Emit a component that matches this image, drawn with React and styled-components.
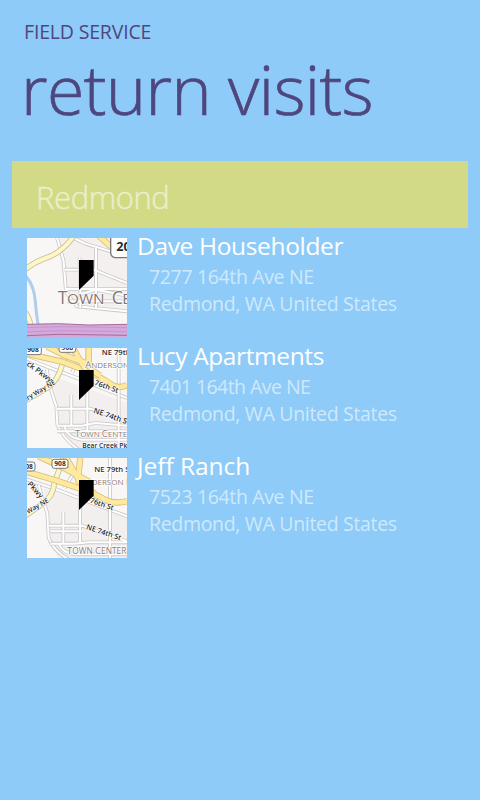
import React from "react";
import styled, { createGlobalStyle } from "styled-components";

const GlobalStyle = createGlobalStyle`
  html, body { margin: 0; padding: 0; background: #8ecbf8; }
  * { box-sizing: border-box; }
`;

const Page = styled.main`
  width: 480px;
  height: 800px;
  overflow: hidden;
  background: #8ecbf8;
  font-family: "Open Sans", "Noto Sans", sans-serif;
  white-space: nowrap;
`;

const Header = styled.header`
  height: 161px;
  padding: 18px 0 0 24px;
  color: #4e467e;
`;

const AppName = styled.div`
  font-size: 19.5px;
  line-height: 28px;
  letter-spacing: -0.18px;
`;

const Title = styled.h1`
  margin: -2px 0 0 -3px;
  font-size: 68px;
  line-height: 90px;
  font-weight: 300;
  letter-spacing: -0.55px;
  -webkit-text-stroke: 0.7px currentColor;
`;

const GroupHeader = styled.h2`
  margin: 0 12px;
  height: 67px;
  padding-left: 24px;
  background: #d2da86;
  color: #ebefca;
  font-size: 31px;
  line-height: 72px;
  font-weight: 300;
  letter-spacing: -0.4px;
  -webkit-text-stroke: 0.4px currentColor;
`;

const List = styled.ul`
  margin: 0;
  padding: 10px 0 0 27px;
  list-style: none;
  display: flex;
  flex-direction: column;
  gap: 10px;
`;

const Visit = styled.li`
  display: flex;
  height: 100px;
  gap: 10px;
`;

const Thumb = styled.svg`
  flex: none;
  width: 100px;
  height: 100px;
  display: block;
  background: #f9f7f6;
`;

const Details = styled.div`
  display: flex;
  flex-direction: column;
  margin-top: -10px;
`;

const Name = styled.div`
  color: #fff;
  font-size: 24.5px;
  line-height: 36px;
  height: 35px;
  letter-spacing: ${(p) => p.$track}px;
`;

const Address = styled.div`
  padding-left: 12px;
  color: #cfe9fc;
  font-size: 19.5px;
  line-height: 27px;
  letter-spacing: ${(p) => p.$track}px;
`;

const Label = styled.text`
  font-family: "Open Sans", "Noto Sans", sans-serif;
  font-size: ${(p) => p.$size || 23}px;
  font-weight: ${(p) => p.$weight || 600};
  fill: ${(p) => p.$color || "#2b2b2b"};
  stroke: #fff;
  stroke-width: 4px;
  stroke-linejoin: round;
  paint-order: stroke;
`;

function Road({ d, kind = "minor" }) {
  const [edge, fill, outer, inner] = {
    minor: ["#cbc8c8", "#ffffff", 11, 6],
    yellow: ["#c4bd98", "#fff6c6", 17, 12],
    major: ["#d8bf7c", "#fee99e", 19, 14],
  }[kind];
  return (
    <g fill="none" strokeLinejoin="round">
      <path d={d} stroke={edge} strokeWidth={outer} />
      <path d={d} stroke={fill} strokeWidth={inner} />
    </g>
  );
}

const Pin = () => <path d="M171 81H215V128L171 171Z" fill="#000" />;

function Shield({ x, y, width = 48, children }) {
  return (
    <g>
      <rect x={x} y={y} width={width} height={27} rx={7} fill="#fff" stroke="#777" strokeWidth={3} />
      <Label x={x + width / 2} y={y + 20} $size={20} $weight={700} textAnchor="middle">
        {children}
      </Label>
    </g>
  );
}

function TownMap() {
  return (
    <Thumb viewBox="15 15 300 300">
      <path d="M104 15H315V236L160 225L128 170Z" fill="#f4f0ef" />
      <Road d="M104 10L125 85L132 178L165 220L315 235" />
      <Road d="M155 15L190 32L315 70" />
      <Road d="M127 110H172M222 45V225M175 110V225M132 168H315M174 184L222 170L315 188M215 110L315 150M135 205H315" />
      <Road d="M173 110V73" />
      <Road kind="yellow" d="M10 109Q40 85 80 72Q122 55 155 10" />
      <Road kind="major" d="M230 8L268 42" />
      <path d="M12 130Q36 158 40 205T49 278" fill="none" stroke="#b0cdec" strokeWidth="9" />
      <Road kind="yellow" d="M10 238Q24 258 27 282" />
      <path d="M15 273L110 272L200 276L315 274V315H15Z" fill="#d4a9dc" />
      <path d="M15 274L110 272L200 276L315 274M15 308L110 304L315 307" fill="none" stroke="#a96a9c" strokeWidth="3" />
      <path d="M15 284L110 281L315 284M15 297L110 293L315 296" fill="none" stroke="#bf8bc9" strokeWidth="2" />
      <rect x="266" y="0" width="80" height="74" rx="15" fill="#fff" stroke="#777" strokeWidth="4" />
      <Label x="283" y="53" $size={38} $weight={700}>20</Label>
      <Label x="107" y="212" $size={53} $weight={500} $color="#807675">
        T<tspan x="135" fontSize="46">OWN</tspan><tspan x="269">C</tspan><tspan x="301" fontSize="46">ENTER</tspan>
      </Label>
      <Pin />
    </Thumb>
  );
}

function ParkwayMap() {
  return (
    <Thumb viewBox="15 15 300 300">
      <path d="M15 180L85 135L103 195L110 255L165 315H15Z" fill="#faf8f7" />
      <path d="M92 100L315 180V315H150L110 255L103 195L85 135Z" fill="#f3efee" />
      <Road d="M10 45L85 75L165 105L315 165" />
      <Road d="M74 78Q84 140 103 190L106 245Q124 288 170 320" />
      <Road d="M104 197H205L315 235M148 245V155M196 15V265M110 248H180L220 240L315 248M105 265H315M128 250Q135 284 180 290H315M290 15V315" />
      <Road d="M120 65L145 35M150 88L175 50" />
      <Road kind="yellow" d="M10 173L80 132Q108 110 119 70L140 10" />
      <Road kind="major" d="M15 32L120 56L190 82Q240 104 264 122T315 126" />
      <Road kind="major" d="M75 10L125 36L205 65M200 10V65Q208 84 235 98M150 10Q168 42 190 78" />
      <Shield x={8} y={8} width={50}>908</Shield>
      <Shield x={111} y={1} width={50}>908</Shield>
      <Label x="239" y="36">NE 79th St</Label>
      <Label x="190" y="75" $size={28} $weight={500} $color="#8b7c7c">A<tspan fontSize="24">NDERSON PARK</tspan></Label>
      <Label transform="translate(13 66) rotate(37)" $size={23}>ck Pkwy</Label>
      <Label transform="translate(8 178) rotate(-31)" $size={20}>ary Way NE</Label>
      <Label transform="translate(183 114) rotate(19)" $size={22}>NE 76th St</Label>
      <Label transform="translate(213 209) rotate(19)" $size={23}>NE 74th St</Label>
      <Label x="159" y="282" $size={28} $weight={500} $color="#8b7c7c">T<tspan fontSize="24">OWN </tspan>C<tspan fontSize="24">ENTER</tspan></Label>
      <Label x="181" y="316" $size={20}>Bear Creek Pkwy</Label>
      <Pin />
    </Thumb>
  );
}

function CreekMap() {
  return (
    <Thumb viewBox="15 15 300 300">
      <path d="M65 105L315 190V315H110L84 270L77 185Z" fill="#f3efee" />
      <Road d="M10 78L100 108L315 190" />
      <Road d="M50 95Q61 140 76 180L80 255Q94 292 140 320" />
      <Road d="M80 218H180L315 265M124 270V178M174 90V270M264 15V315M85 272H155L200 268H315M110 272Q120 300 160 304H315M85 235H180" />
      <Road d="M97 87L110 50M128 105L155 60" />
      <Road kind="yellow" d="M10 188L58 155Q94 132 97 90L126 10" />
      <Road kind="major" d="M10 55L100 82L175 107Q225 126 250 140T315 145" />
      <Road kind="major" d="M50 10L120 42L205 88M175 10L168 82Q188 109 220 122M130 10L170 80" />
      <Shield x={-8} y={27} width={47}>908</Shield>
      <Shield x={90} y={19} width={48}>908</Shield>
      <Label x="217" y="56">NE 79th St</Label>
      <Label x="191" y="97" $size={28} $weight={500} $color="#8b7c7c"><tspan fontSize="24">NDERSON</tspan> P<tspan fontSize="24">ARK</tspan></Label>
      <Label transform="translate(15 94) rotate(48)" $size={23}>Pkwy</Label>
      <Label transform="translate(18 183) rotate(-30)" $size={20}>Way NE</Label>
      <Label transform="translate(169 137) rotate(19)" $size={22}>NE 76th St</Label>
      <Label transform="translate(191 228) rotate(18)" $size={22}>NE 74th St</Label>
      <Label x="135" y="304" $size={29} $weight={500} $color="#8b7c7c">T<tspan fontSize="25">OWN </tspan>C<tspan fontSize="25">ENTER</tspan></Label>
      <Pin />
    </Thumb>
  );
}

const visits = [
  { name: "Dave Householder", street: "7277 164th Ave NE", Map: TownMap, nameTrack: -0.35, streetTrack: -0.35 },
  { name: "Lucy Apartments", street: "7401 164th Ave NE", Map: ParkwayMap, nameTrack: -0.4, streetTrack: -0.55 },
  { name: "Jeff Ranch", street: "7523 164th Ave NE", Map: CreekMap, nameTrack: -0.05, streetTrack: -0.35 },
];

export default function App() {
  return (
    <Page>
      <GlobalStyle />
      <Header>
        <AppName>FIELD SERVICE</AppName>
        <Title>return visits</Title>
      </Header>
      <GroupHeader>Redmond</GroupHeader>
      <List>
        {visits.map(({ name, street, Map, nameTrack, streetTrack }) => (
          <Visit key={name}>
            <Map />
            <Details>
              <Name $track={nameTrack}>{name}</Name>
              <Address $track={streetTrack}>{street}</Address>
              <Address $track={-0.32}>Redmond, WA United States</Address>
            </Details>
          </Visit>
        ))}
      </List>
    </Page>
  );
}
